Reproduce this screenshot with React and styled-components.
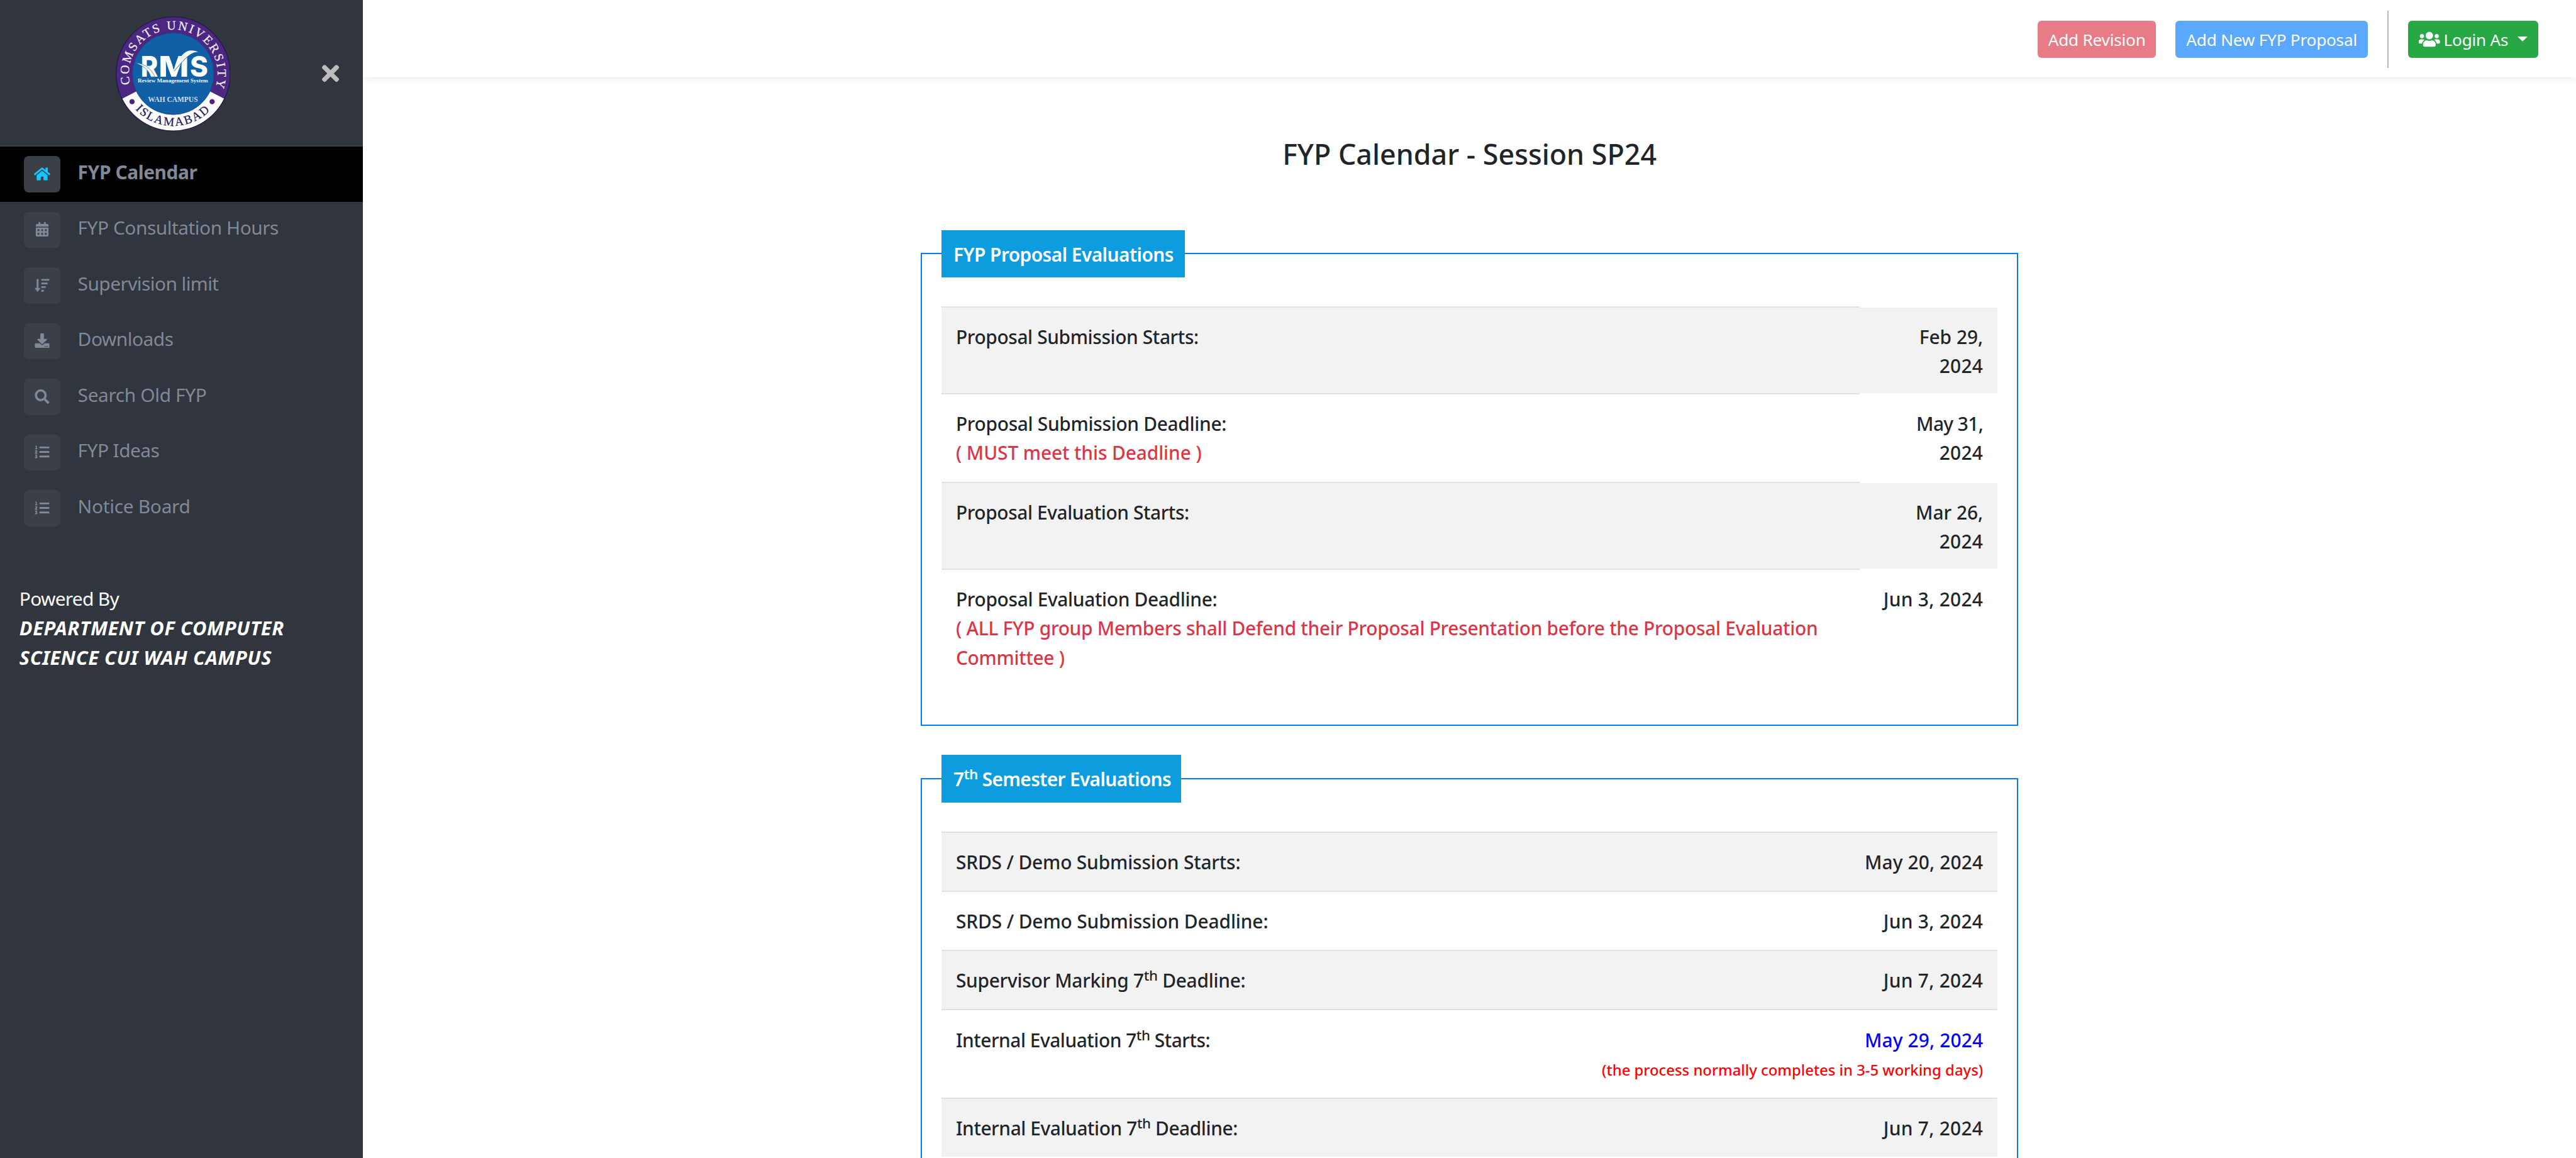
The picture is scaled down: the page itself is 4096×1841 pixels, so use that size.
import React from 'react';
import styled, { createGlobalStyle, css } from 'styled-components';
import {
  FaHome,
  FaCalendarAlt,
  FaSortAmountDown,
  FaDownload,
  FaSearch,
  FaListOl,
  FaTimes,
  FaUsers,
} from 'react-icons/fa';

/* Sizes are written in design units and scaled to the page. */
const SCALE = 0.96195;
const u = (n) => `${Math.round(n * SCALE * 100) / 100}px`;

const GlobalStyle = createGlobalStyle`
  *, *::before, *::after { box-sizing: border-box; }
  body {
    margin: 0;
    background: #fff;
    color: #212529;
    font-family: "Noto Sans", "Open Sans", sans-serif;
    overflow: hidden;
  }
`;

const Page = styled.div`
  display: flex;
  height: 100vh;
  overflow: hidden;
`;

/* ---------- sidebar ---------- */

const Sidebar = styled.aside`
  flex: none;
  width: ${u(600)};
  background: #31353d;
  color: #fff;
  z-index: 1;
`;

const Brand = styled.div`
  display: flex;
  align-items: center;
  height: ${u(242)};
  padding-left: ${u(191)};
  border-bottom: 2px solid #3a3f48;
`;

const BrandLogo = styled.svg`
  flex: none;
  width: ${u(190)};
  height: ${u(190)};
  margin-top: ${u(4)};
`;

const CloseButton = styled.span`
  display: flex;
  margin-left: ${u(151.6)};
  margin-top: ${u(2)};
  font-size: ${u(41)};
  color: #bdbdbd;

  svg {
    width: 0.6875em;
  }
`;

const Nav = styled.nav`
  display: flex;
  flex-direction: column;
`;

const NavItem = styled.a`
  display: flex;
  align-items: flex-start;
  gap: ${u(28.5)};
  height: ${u(92)};
  padding: ${u(16)} 0 0 ${u(40)};
  color: #818896;
  ${(p) =>
    p.$active &&
    css`
      background: #000;
      font-weight: 700;
    `}
`;

const NavIcon = styled.span`
  display: flex;
  align-items: center;
  justify-content: center;
  width: ${u(60)};
  height: ${u(60)};
  padding-bottom: ${u(2)};
  border-radius: ${u(8)};
  background: #3a3f48;
  font-size: ${u(24)};
  color: ${(p) => (p.$active ? '#16c7ff' : '#818896')};

  svg {
    width: 1.125em;
  }
`;

const NavLabel = styled.span`
  padding-top: ${u(2.5)};
  font-size: ${u(31.04)};
  line-height: ${u(48)};
  letter-spacing: ${(p) => p.$track}px;
  white-space: nowrap;
`;

const Credits = styled.div`
  margin: ${u(80)} 0 0 ${u(32)};
  font-size: ${u(31.04)};
  line-height: ${u(48)};
  letter-spacing: -0.7px;
  white-space: nowrap;
`;

const Department = styled.div`
  font-size: ${u(32)};
  font-style: italic;
  font-weight: 700;
  letter-spacing: 0.6px;
`;

/* ---------- main column ---------- */

const Main = styled.main`
  flex: 1;
  min-width: 0;
`;

const Topbar = styled.header`
  display: flex;
  align-items: center;
  justify-content: flex-end;
  gap: ${u(32)};
  height: ${u(128)};
  padding: ${u(2)} ${u(62)} 0 0;
  background: #fff;
  box-shadow: 0 ${u(4)} ${u(8)} rgba(0, 0, 0, 0.06);
`;

const buttonColors = {
  danger: '#e77c87',
  primary: '#5aa8ff',
  success: '#28a745',
};

const Button = styled.button`
  display: flex;
  align-items: center;
  justify-content: center;
  width: ${(p) => u(p.$width)};
  height: ${u(62)};
  padding: 0;
  border: 0;
  border-radius: ${u(6.4)};
  background: ${(p) => buttonColors[p.$tone]};
  color: #fff;
  font-family: inherit;
  font-size: ${u(27.16)};
  letter-spacing: -0.2px;
  white-space: nowrap;
`;

const ButtonText = styled.span`
  padding-top: ${u(2)};
  line-height: ${u(60)};
`;

const ButtonIcon = styled.span`
  display: flex;
  margin-right: ${u(6)};
  font-size: ${u(28)};

  svg {
    width: 1.25em;
  }
`;

const Caret = styled.span`
  margin-left: ${u(15)};
  margin-bottom: ${u(2)};
  border-top: ${u(8.4)} solid #fff;
  border-left: ${u(8.4)} solid transparent;
  border-right: ${u(8.4)} solid transparent;
`;

const Divider = styled.span`
  width: 2px;
  height: ${u(94)};
  background: #b7b7b7;
`;

const Title = styled.h4`
  margin: ${u(97.5)} 0 ${u(96.5)};
  font-size: ${u(46.56)};
  font-weight: 500;
  line-height: ${u(58)};
  text-align: center;
`;

const Panels = styled.div`
  display: flex;
  flex-direction: column;
  gap: ${u(48)};
  width: ${u(1814)};
  margin: 0 auto;
`;

const Panel = styled.fieldset`
  min-width: 0;
  height: ${(p) => u(p.$height)};
  margin: 0;
  padding: 0 ${u(32)};
  border: 2px solid #007bff;
`;

const Legend = styled.legend`
  width: ${(p) => u(p.$width)};
  height: ${u(78)};
  padding: 0 0 0 ${u(20)};
  background: #0d9ddf;
  color: #fff;
  font-size: ${u(31.04)};
  font-weight: 600;
  line-height: ${u(81)};
  letter-spacing: ${(p) => p.$track}px;
  white-space: nowrap;
`;

const Sup = styled.sup`
  font-size: 75%;
  line-height: 0;
  vertical-align: 0.48em;
`;

const Schedule = styled.div`
  display: flex;
  flex-direction: column;
  margin-top: ${u(48)};
  font-size: ${u(31.04)};
  font-weight: 500;
  line-height: ${u(48)};
`;

const Row = styled.div`
  display: grid;
  grid-template-columns: minmax(0, 1fr) ${(p) => u(p.$dateWidth)};
  height: ${(p) => u(p.$height)};

  &:nth-child(odd) > * {
    background-color: #f2f2f2;
  }
`;

const Cell = styled.div`
  padding: ${u(25)} ${u(24)} 0;
  border-top: 2px solid #dee2e6;
`;

const DateCell = styled(Cell)`
  text-align: right;
  ${(p) =>
    p.$plain &&
    css`
      border-top-color: transparent;
      background-clip: padding-box;
    `}
`;

const lineColors = {
  body: '#212529',
  danger: '#dc3545',
  blue: '#0000ff',
  red: '#ff0000',
};

const Line = styled.div`
  color: ${(p) => lineColors[p.$tone || 'body']};
  letter-spacing: ${(p) => p.$track || 0}px;
  white-space: nowrap;
`;

const Note = styled(Line)`
  padding-top: ${u(1.5)};
  font-size: ${u(24.83)};
`;

/* ---------- data ---------- */

const navItems = [
  { label: 'FYP Calendar', Icon: FaHome, track: -0.4, active: true },
  { label: 'FYP Consultation Hours', Icon: FaCalendarAlt, track: -0.47 },
  { label: 'Supervision limit', Icon: FaSortAmountDown, track: -0.55 },
  { label: 'Downloads', Icon: FaDownload, track: -0.5 },
  { label: 'Search Old FYP', Icon: FaSearch, track: -0.36 },
  { label: 'FYP Ideas', Icon: FaListOl, track: -0.55 },
  { label: 'Notice Board', Icon: FaListOl, track: -0.29 },
];

const seventh = <>7<Sup>th</Sup></>;

const panels = [
  {
    id: 'proposal',
    legend: 'FYP Proposal Evaluations',
    legendWidth: 402,
    legendTrack: -0.55,
    height: 820,
    dateWidth: 228,
    plainDates: true,
    rows: [
      {
        height: 144,
        lines: [{ text: 'Proposal Submission Starts:', track: -0.38 }],
        dates: [{ text: 'Feb 29,' }, { text: '2024', track: 0.3 }],
      },
      {
        height: 146,
        lines: [
          { text: 'Proposal Submission Deadline:', track: -0.31 },
          { text: '( MUST meet this Deadline )', tone: 'danger', track: -0.1 },
        ],
        dates: [{ text: 'May 31,', track: -0.6 }, { text: '2024', track: 0.3 }],
      },
      {
        height: 144,
        lines: [{ text: 'Proposal Evaluation Starts:', track: -0.41 }],
        dates: [{ text: 'Mar 26,' }, { text: '2024', track: 0.3 }],
      },
      {
        height: 194,
        lines: [
          { text: 'Proposal Evaluation Deadline:', track: -0.33 },
          {
            text: '( ALL FYP group Members shall Defend their Proposal Presentation before the Proposal Evaluation',
            tone: 'danger',
            track: -0.275,
          },
          { text: 'Committee )', tone: 'danger', track: -0.3 },
        ],
        dates: [{ text: 'Jun 3, 2024', track: 0.3 }],
      },
    ],
  },
  {
    id: 'semester7',
    legend: <>{seventh} Semester Evaluations</>,
    legendWidth: 396,
    legendTrack: -0.65,
    height: 900,
    dateWidth: 700,
    rows: [
      {
        height: 98,
        lines: [{ text: 'SRDS / Demo Submission Starts:', track: -0.16 }],
        dates: [{ text: 'May 20, 2024', track: 0.16 }],
      },
      {
        height: 98,
        lines: [{ text: 'SRDS / Demo Submission Deadline:', track: -0.12 }],
        dates: [{ text: 'Jun 3, 2024', track: 0.3 }],
      },
      {
        height: 98,
        lines: [{ text: <>Supervisor Marking {seventh} Deadline:</>, track: -0.28 }],
        dates: [{ text: 'Jun 7, 2024', track: 0.3 }],
      },
      {
        height: 146,
        lines: [{ text: <>Internal Evaluation {seventh} Starts:</>, track: -0.47 }],
        dates: [{ text: 'May 29, 2024', tone: 'blue', track: 0.16 }],
        note: '(the process normally completes in 3-5 working days)',
      },
      {
        height: 98,
        lines: [{ text: <>Internal Evaluation {seventh} Deadline:</>, track: -0.42 }],
        dates: [{ text: 'Jun 7, 2024', track: 0.3 }],
      },
    ],
  },
];

function Logo() {
  return (
    <BrandLogo viewBox="36 37 570 570">
      <defs>
        <path id="ringTop" d="M 107.4 374 A 220 220 0 1 1 529 394" />
        <path id="ringBottom" d="M 133 498 A 258 258 0 0 0 506 502" />
      </defs>
      <circle cx="321" cy="322" r="283" fill="#4b2782" stroke="#241747" strokeWidth="4" />
      <path d="M 69 445 A 280 280 0 0 0 573 445 L 503 409 A 203 203 0 0 1 139 409 Z" fill="#fdfefc" />
      <circle cx="321" cy="322" r="202" fill="#1160a5" stroke="#174a8c" strokeWidth="3" />
      <circle cx="117" cy="460" r="13" fill="#4b2782" />
      <circle cx="514" cy="460" r="13" fill="#4b2782" />
      <text fontFamily="Liberation Serif, serif" fontSize="62" fill="#f4eef8" stroke="#f4eef8" strokeWidth="0.8">
        <textPath href="#ringTop" textLength="812">COMSATS UNIVERSITY</textPath>
      </text>
      <text fontFamily="Liberation Serif, serif" fontSize="60" fill="#1b1a5e" stroke="#1b1a5e" strokeWidth="0.8">
        <textPath href="#ringBottom" textLength="412">ISLAMABAD</textPath>
      </text>
      <g fontFamily="Inter, sans-serif" fontWeight="800" fontSize="143" fill="#fbfdfa">
        <text x="160" y="337" textLength="86" lengthAdjust="spacingAndGlyphs">R</text>
        <text x="249" y="337" textLength="150" lengthAdjust="spacingAndGlyphs">M</text>
        <text x="404" y="337" textLength="90" lengthAdjust="spacingAndGlyphs">S</text>
      </g>
      <path d="M 322 304 C 346 254 370 207 408 206 C 426 206 438 209 447 214 C 405 214 376 250 326 308 Z" fill="#fbfdfa" />
      <path d="M 326 308 C 376 250 405 214 447 214" fill="none" stroke="#1160a5" strokeWidth="3" />
      <path d="M 132 267 C 175 272 210 290 230 337 L 210 337 C 200 300 170 282 132 267 Z" fill="#fbfdfa" stroke="#1160a5" strokeWidth="2" />
      <g fontFamily="Liberation Serif, serif" fontWeight="700">
        <text x="145" y="364" fontSize="28" fill="#f0f5fb" textLength="348" lengthAdjust="spacingAndGlyphs">
          Review Management System
        </text>
        <text x="196" y="461" fontSize="38" fill="#d0dcf2" textLength="247" lengthAdjust="spacingAndGlyphs">
          WAH CAMPUS
        </text>
      </g>
    </BrandLogo>
  );
}

function SchedulePanel({ panel }) {
  return (
    <Panel $height={panel.height}>
      <Legend $width={panel.legendWidth} $track={panel.legendTrack}>
        {panel.legend}
      </Legend>
      <Schedule>
        {panel.rows.map((row, i) => (
          <Row key={i} $height={row.height} $dateWidth={panel.dateWidth}>
            <Cell>
              {row.lines.map((line, k) => (
                <Line key={k} $tone={line.tone} $track={line.track}>
                  {line.text}
                </Line>
              ))}
            </Cell>
            <DateCell $plain={panel.plainDates}>
              {row.dates.map((line, k) => (
                <Line key={k} $tone={line.tone} $track={line.track}>
                  {line.text}
                </Line>
              ))}
              {row.note && <Note $tone="red">{row.note}</Note>}
            </DateCell>
          </Row>
        ))}
      </Schedule>
    </Panel>
  );
}

export default function App() {
  return (
    <Page>
      <GlobalStyle />
      <Sidebar>
        <Brand>
          <Logo />
          <CloseButton>
            <FaTimes />
          </CloseButton>
        </Brand>
        <Nav>
          {navItems.map(({ label, Icon, track, active }) => (
            <NavItem key={label} $active={active}>
              <NavIcon $active={active}>
                <Icon />
              </NavIcon>
              <NavLabel $track={track}>{label}</NavLabel>
            </NavItem>
          ))}
        </Nav>
        <Credits>
          Powered By
          <Department>DEPARTMENT OF COMPUTER</Department>
          <Department>SCIENCE CUI WAH CAMPUS</Department>
        </Credits>
      </Sidebar>
      <Main>
        <Topbar>
          <Button $tone="danger" $width={196}>
            <ButtonText>Add Revision</ButtonText>
          </Button>
          <Button $tone="primary" $width={318}>
            <ButtonText>Add New FYP Proposal</ButtonText>
          </Button>
          <Divider />
          <Button $tone="success" $width={216}>
            <ButtonIcon>
              <FaUsers />
            </ButtonIcon>
            <ButtonText>Login As</ButtonText>
            <Caret />
          </Button>
        </Topbar>
        <Title>FYP Calendar - Session SP24</Title>
        <Panels>
          {panels.map((panel) => (
            <SchedulePanel key={panel.id} panel={panel} />
          ))}
        </Panels>
      </Main>
    </Page>
  );
}
